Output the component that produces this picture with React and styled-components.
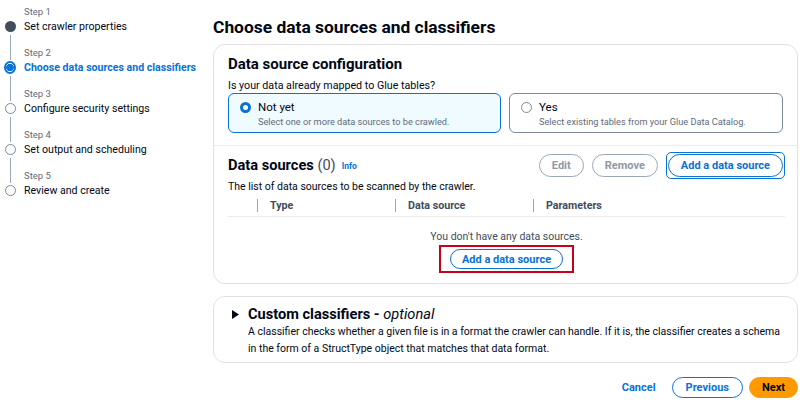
import React from 'react';
import styled, { createGlobalStyle, css } from 'styled-components';

const GlobalStyle = createGlobalStyle`
  html, body {
    margin: 0;
    padding: 0;
    background: #ffffff;
  }
  body {
    font-family: Roboto, "Open Sans", Arial, sans-serif;
    color: #000716;
  }
  * { box-sizing: border-box; }
`;

const Page = styled.div`
  width: 800px;
  height: 402px;
  display: flex;
  overflow: hidden;
`;

const Sidebar = styled.nav`
  width: 213px;
  flex-shrink: 0;
  padding: 5px 0 0 4px;
`;

const StepItem = styled.div`
  display: grid;
  grid-template-columns: 12px 1fr;
  grid-template-rows: 14px 16px 11px;
  column-gap: 8px;
`;

const Rail = styled.div`
  display: flex;
  justify-content: center;
  width: 12px;
`;

const RailLine = styled.div`
  width: 1px;
  height: 100%;
  background: ${(p) => (p.$hidden ? 'transparent' : '#9ba7b6')};
`;

const Dot = styled.div`
  width: 11px;
  height: 11px;
  border-radius: 50%;
  margin-top: 2px;
  ${(p) =>
    p.$state === 'done' &&
    css`
      background: #414d5c;
    `}
  ${(p) =>
    p.$state === 'active' &&
    css`
      width: 13px;
      height: 13px;
      margin-top: 1px;
      border: 2px solid #0972d3;
      background: radial-gradient(circle, #0972d3 0 3.5px, #ffffff 4px);
    `}
  ${(p) =>
    p.$state === 'todo' &&
    css`
      border: 1px solid #7d8998;
      background: #fff;
    `}
`;

const StepLabel = styled.div`
  font-size: 9.5px;
  line-height: 14px;
  color: #5f6b7a;
`;

const StepTitle = styled.div`
  font-size: 10.6px;
  line-height: 16px;
  color: ${(p) => (p.$active ? '#0972d3' : '#000716')};
  font-weight: ${(p) => (p.$active ? 700 : 400)};
  white-space: nowrap;
`;

const Main = styled.main`
  flex: 1;
  padding: 15px 4px 0 0;
  display: flex;
  flex-direction: column;
`;

const PageTitle = styled.h1`
  margin: 0;
  font-size: 17.4px;
  line-height: 24px;
  font-weight: 700;
`;

const Card = styled.section`
  border: 1px solid #dfe1e4;
  border-radius: 12px;
  margin-top: ${(p) => p.$mt || 0}px;
  background: #fff;
`;

const CardSection = styled.div`
  padding: ${(p) => p.$pad};
  border-top: ${(p) => (p.$divided ? '1px solid #e9ebed' : 'none')};
`;

const SectionTitle = styled.h2`
  margin: 0;
  font-size: ${(p) => p.$size || 15}px;
  line-height: 22px;
  font-weight: 700;
`;

const Question = styled.div`
  font-size: 10.7px;
  line-height: 14px;
  margin-top: 4px;
`;

const Tiles = styled.div`
  display: grid;
  grid-template-columns: 273px 274px;
  column-gap: 8px;
`;

const Tile = styled.div`
  height: 40px;
  border-radius: 6px;
  border: ${(p) => (p.$selected ? '1.5px solid #0972d3' : '1.5px solid #7d8998')};
  background: ${(p) => (p.$selected ? '#f0fbff' : '#ffffff')};
  display: flex;
  align-items: flex-start;
  gap: 7px;
  padding: 6px 10px 0 11px;
`;

const Radio = styled.span`
  width: 11px;
  height: 11px;
  border-radius: 50%;
  flex-shrink: 0;
  margin-top: 2px;
  border: ${(p) => (p.$checked ? '3.5px solid #0972d3' : '1px solid #7d8998')};
  background: #fff;
`;

const TileTitle = styled.div`
  font-size: 11.5px;
  line-height: 15px;
`;

const TileDesc = styled.div`
  font-size: 9.2px;
  line-height: 13px;
  color: #5f6b7a;
`;

const HeaderRow = styled.div`
  display: flex;
  align-items: center;
  justify-content: space-between;
`;

const Counter = styled.span`
  font-weight: 400;
  color: #414d5c;
`;

const InfoLink = styled.a`
  font-size: 8.5px;
  font-weight: 700;
  color: #0972d3;
  margin-left: 6px;
  vertical-align: 1px;
  text-decoration: none;
`;

const Actions = styled.div`
  display: flex;
  align-items: center;
  gap: 8px;
`;

const Button = styled.button`
  font-family: inherit;
  font-size: 11px;
  font-weight: 700;
  height: ${(p) => p.$h || 23}px;
  padding: 0 ${(p) => p.$px || 12}px;
  border-radius: 20px;
  background: #fff;
  cursor: pointer;
  white-space: nowrap;
  ${(p) =>
    p.$variant === 'disabled' &&
    css`
      border: 1.5px solid #9ba7b6;
      color: #8d99a8;
    `}
  ${(p) =>
    p.$variant === 'normal' &&
    css`
      border: 1.5px solid #0972d3;
      color: #0972d3;
    `}
  ${(p) =>
    p.$variant === 'primary' &&
    css`
      border: 1.5px solid #ff9900;
      background: #ff9900;
      color: #000716;
    `}
  ${(p) =>
    p.$variant === 'link' &&
    css`
      border: none;
      color: #0972d3;
      background: transparent;
    `}
`;

const FocusRing = styled.span`
  display: inline-flex;
  padding: 1px;
  border: 1.5px solid #0972d3;
  border-radius: 5px;
`;

const Highlight = styled.span`
  display: inline-flex;
  padding: 2px 9px;
  border: 2.5px solid #c8001a;
`;

const Description = styled.div`
  font-size: 10.5px;
  line-height: 14px;
  margin-top: 1px;
`;

const TableHead = styled.div`
  display: grid;
  grid-template-columns: 29px 138px 138px 1fr;
  height: 22px;
  align-items: center;
  border-bottom: 1px solid #e9ebed;
  margin-top: 1px;
`;

const HeadCell = styled.div`
  font-size: 10.7px;
  font-weight: 700;
  color: #414d5c;
  padding-left: 12px;
  border-left: ${(p) => (p.$first ? 'none' : '1px solid #9ba7b6')};
  line-height: 13px;
`;

const Empty = styled.div`
  display: flex;
  flex-direction: column;
  align-items: center;
  padding-top: 13px;
  font-size: 10.5px;
  line-height: 14px;
  color: #414d5c;
  gap: 1px;
`;

const Expander = styled.div`
  display: grid;
  grid-template-columns: 16px 1fr;
  padding: 8px 14px 5px 18px;
`;

const Caret = styled.svg`
  width: 7px;
  height: 9px;
  margin-top: 5px;
`;

const ExpTitle = styled.div`
  font-size: 14.6px;
  line-height: 18px;
  font-weight: 700;
  em {
    font-weight: 400;
    font-style: italic;
  }
`;

const ExpText = styled.div`
  font-size: 10.5px;
  line-height: 17px;
`;

const Footer = styled.div`
  display: flex;
  justify-content: flex-end;
  align-items: center;
  gap: 6px;
  margin-top: 14px;
`;

const steps = [
  { label: 'Step 1', title: 'Set crawler properties', state: 'done' },
  { label: 'Step 2', title: 'Choose data sources and classifiers', state: 'active' },
  { label: 'Step 3', title: 'Configure security settings', state: 'todo' },
  { label: 'Step 4', title: 'Set output and scheduling', state: 'todo' },
  { label: 'Step 5', title: 'Review and create', state: 'todo' },
];

const App = () => {
  return (
    <>
      <GlobalStyle />
      <Page>
        <Sidebar>
          {steps.map((s, i) => (
            <StepItem key={s.label}>
              <Rail>
                <RailLine $hidden={i === 0} />
              </Rail>
              <StepLabel>{s.label}</StepLabel>
              <Rail>
                <Dot $state={s.state} />
              </Rail>
              <StepTitle $active={s.state === 'active'}>{s.title}</StepTitle>
              <Rail>
                <RailLine $hidden={i === steps.length - 1} />
              </Rail>
              <div />
            </StepItem>
          ))}
        </Sidebar>

        <Main>
          <PageTitle>Choose data sources and classifiers</PageTitle>

          <Card $mt={5}>
            <CardSection $pad="8px 14px 12px 14px">
              <SectionTitle>Data source configuration</SectionTitle>
              <Question>Is your data already mapped to Glue tables?</Question>
              <Tiles>
                <Tile $selected>
                  <Radio $checked />
                  <div>
                    <TileTitle>Not yet</TileTitle>
                    <TileDesc>Select one or more data sources to be crawled.</TileDesc>
                  </div>
                </Tile>
                <Tile>
                  <Radio />
                  <div>
                    <TileTitle>Yes</TileTitle>
                    <TileDesc>Select existing tables from your Glue Data Catalog.</TileDesc>
                  </div>
                </Tile>
              </Tiles>
            </CardSection>

            <CardSection $divided $pad="6px 12px 10px 14px">
              <HeaderRow>
                <SectionTitle $size={14.6}>
                  Data sources <Counter>(0)</Counter>
                  <InfoLink href="#">Info</InfoLink>
                </SectionTitle>
                <Actions>
                  <Button $variant="disabled">Edit</Button>
                  <Button $variant="disabled">Remove</Button>
                  <FocusRing>
                    <Button $variant="normal">Add a data source</Button>
                  </FocusRing>
                </Actions>
              </HeaderRow>
              <Description>The list of data sources to be scanned by the crawler.</Description>
              <TableHead>
                <HeadCell $first />
                <HeadCell>Type</HeadCell>
                <HeadCell>Data source</HeadCell>
                <HeadCell>Parameters</HeadCell>
              </TableHead>
              <Empty>
                You don&apos;t have any data sources.
                <Highlight>
                  <Button $variant="normal" $h={20} $px={11}>
                    Add a data source
                  </Button>
                </Highlight>
              </Empty>
            </CardSection>
          </Card>

          <Card $mt={12}>
            <Expander>
              <Caret viewBox="0 0 7 9">
                <path d="M0 0 L7 4.5 L0 9 Z" fill="#000716" />
              </Caret>
              <div>
                <ExpTitle>
                  Custom classifiers - <em>optional</em>
                </ExpTitle>
                <ExpText>
                  A classifier checks whether a given file is in a format the crawler can handle. If it is, the
                  classifier creates a schema in the form of a StructType object that matches that data format.
                </ExpText>
              </div>
            </Expander>
          </Card>

          <Footer>
            <Button $variant="link" $h={21} $px={10}>
              Cancel
            </Button>
            <Button $variant="normal" $h={21} $px={13}>
              Previous
            </Button>
            <Button $variant="primary" $h={21} $px={12}>
              Next
            </Button>
          </Footer>
        </Main>
      </Page>
    </>
  );
};

export default App;
